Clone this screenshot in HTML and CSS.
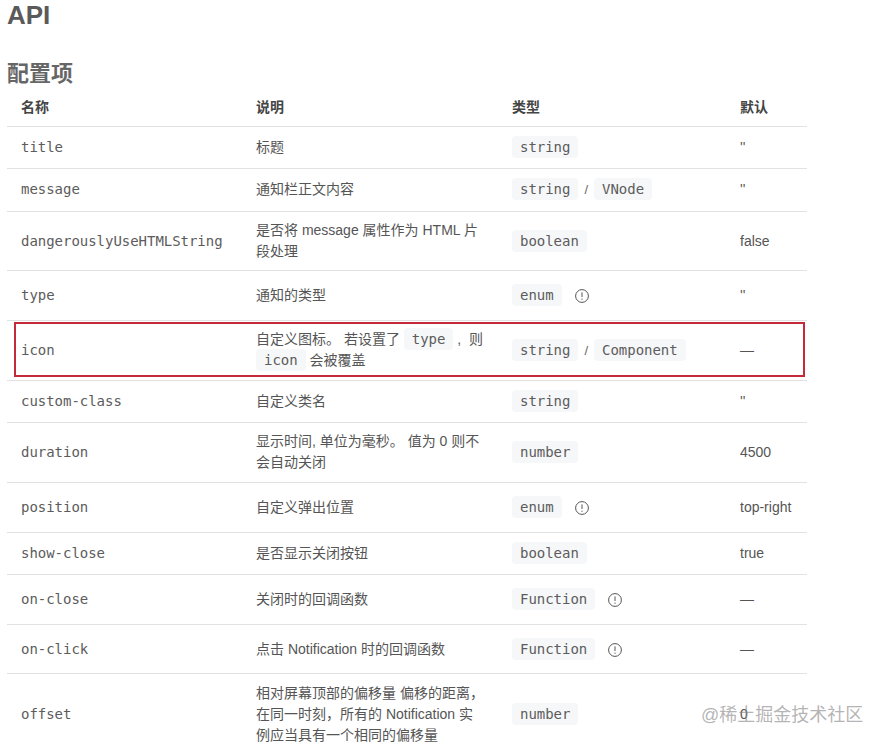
FILE: index.html
```html
<!DOCTYPE html>
<html lang="zh-CN">
<head>
<meta charset="utf-8">
<title>API</title>
<link rel="stylesheet" href="styles.css">
</head>
<body>
<main class="page">
<h1 class="title">API</h1>
<h2 class="subtitle">配置项</h2>
<div class="table-wrap">
<table class="api">
<colgroup><col class="c1"><col class="c2"><col class="c3"><col class="c4"></colgroup>
<thead>
<tr class="head"><th>名称</th><th>说明</th><th>类型</th><th>默认</th></tr>
</thead>
<tbody>
<tr class="r42"><td class="mono">title</td><td>标题</td><td><code>string</code></td><td>''</td></tr>
<tr class="r43"><td class="mono">message</td><td>通知栏正文内容</td><td><code>string</code><span class="sep">/</span><code>VNode</code></td><td>''</td></tr>
<tr class="r59"><td class="mono">dangerouslyUseHTMLString</td><td>是否将 message 属性作为 HTML 片段处理</td><td><code>boolean</code></td><td>false</td></tr>
<tr class="r50"><td class="mono">type</td><td>通知的类型</td><td><code>enum</code><svg class="info" viewBox="0 0 14 14"><circle cx="7" cy="7" r="6.4"/><path d="M7 3.4v4.6M7 9.6v1.2"/></svg></td><td>''</td></tr>
<tr class="r60"><td class="mono">icon</td><td>自定义图标。 若设置了 <code>type</code> , &nbsp;则 <code>icon</code> 会被覆盖</td><td><code>string</code><span class="sep">/</span><code>Component</code></td><td>—</td></tr>
<tr class="r42"><td class="mono">custom-class</td><td>自定义类名</td><td><code>string</code></td><td>''</td></tr>
<tr class="r60"><td class="mono">duration</td><td>显示时间, 单位为毫秒。 值为 0 则不会自动关闭</td><td><code>number</code></td><td>4500</td></tr>
<tr class="r50"><td class="mono">position</td><td>自定义弹出位置</td><td><code>enum</code><svg class="info" viewBox="0 0 14 14"><circle cx="7" cy="7" r="6.4"/><path d="M7 3.4v4.6M7 9.6v1.2"/></svg></td><td>top-right</td></tr>
<tr class="r42"><td class="mono">show-close</td><td>是否显示关闭按钮</td><td><code>boolean</code></td><td>true</td></tr>
<tr class="r50"><td class="mono">on-close</td><td>关闭时的回调函数</td><td><code>Function</code><svg class="info" viewBox="0 0 14 14"><circle cx="7" cy="7" r="6.4"/><path d="M7 3.4v4.6M7 9.6v1.2"/></svg></td><td>—</td></tr>
<tr class="r49"><td class="mono">on-click</td><td>点击 Notification 时的回调函数</td><td><code>Function</code><svg class="info" viewBox="0 0 14 14"><circle cx="7" cy="7" r="6.4"/><path d="M7 3.4v4.6M7 9.6v1.2"/></svg></td><td>—</td></tr>
<tr class="r82"><td class="mono">offset</td><td>相对屏幕顶部的偏移量 偏移的距离，在同一时刻，所有的 Notification 实例应当具有一个相同的偏移量</td><td><code>number</code></td><td>0</td></tr>
</tbody>
</table>
<div class="highlight"></div>
</div>
</main>
<div class="watermark">@稀土掘金技术社区</div>
</body>
</html>
```

FILE: styles.css
```css
html, body {
  margin: 0;
  height: 100%;
  overflow: hidden;
  background: #fff;
}
body {
  position: relative;
  font-family: "Liberation Sans", "Noto Sans CJK SC", sans-serif;
  font-size: 14px;
  line-height: 21px;
  color: #555;
}
.page {
  padding-left: 7px;
}
.title {
  margin: 0;
  height: 31px;
  font-size: 26px;
  line-height: 31px;
  font-weight: 700;
  color: #5a5a5a;
}
.subtitle {
  margin: 28px 0 0;
  height: 29px;
  font-size: 22px;
  line-height: 30px;
  font-weight: 700;
  color: #666;
}
.table-wrap {
  position: relative;
  width: 800px;
}
.api {
  width: 800px;
  table-layout: fixed;
  border-collapse: separate;
  border-spacing: 0;
}
.c1 { width: 235px; }
.c2 { width: 256px; }
.c3 { width: 228px; }
.c4 { width: 81px; }
th, td {
  box-sizing: border-box;
  padding: 0 14px;
  text-align: left;
  vertical-align: middle;
  border-bottom: 1px solid #e2e2e2;
}
th {
  font-weight: 600;
  color: #444;
  font-size: 14px;
}
.head { height: 39px; }
.r42 { height: 42px; }
.r43 { height: 43px; }
.r49 { height: 49px; }
.r50 { height: 50px; }
.r59 { height: 59px; }
.r60 { height: 60px; }
.r82 { height: 82px; }
.r43 td,
.r60 td:nth-child(2) {
  padding-bottom: 2px;
}
.mono, code {
  font-family: "DejaVu Sans Mono", "Liberation Mono", monospace;
  font-size: 14px;
  letter-spacing: -0.03px;
  color: #5c5c5c;
}
code {
  padding: 3px 8px;
  border-radius: 4px;
  background: #f6f7f9;
}
.sep {
  margin: 0 6px;
  font-size: 13px;
  color: #666;
}
.info {
  width: 14px;
  height: 14px;
  margin-left: 13px;
  vertical-align: -3px;
  fill: none;
  stroke: #555;
  stroke-width: 1;
}
.highlight {
  position: absolute;
  left: 7px;
  top: 234px;
  width: 791px;
  height: 55px;
  box-sizing: border-box;
  border: 2px solid #c42a3a;
}
.watermark {
  position: absolute;
  left: 701px;
  top: 702px;
  font-size: 18px;
  line-height: 26px;
  white-space: nowrap;
  color: rgba(130, 130, 130, 0.6);
}
```
